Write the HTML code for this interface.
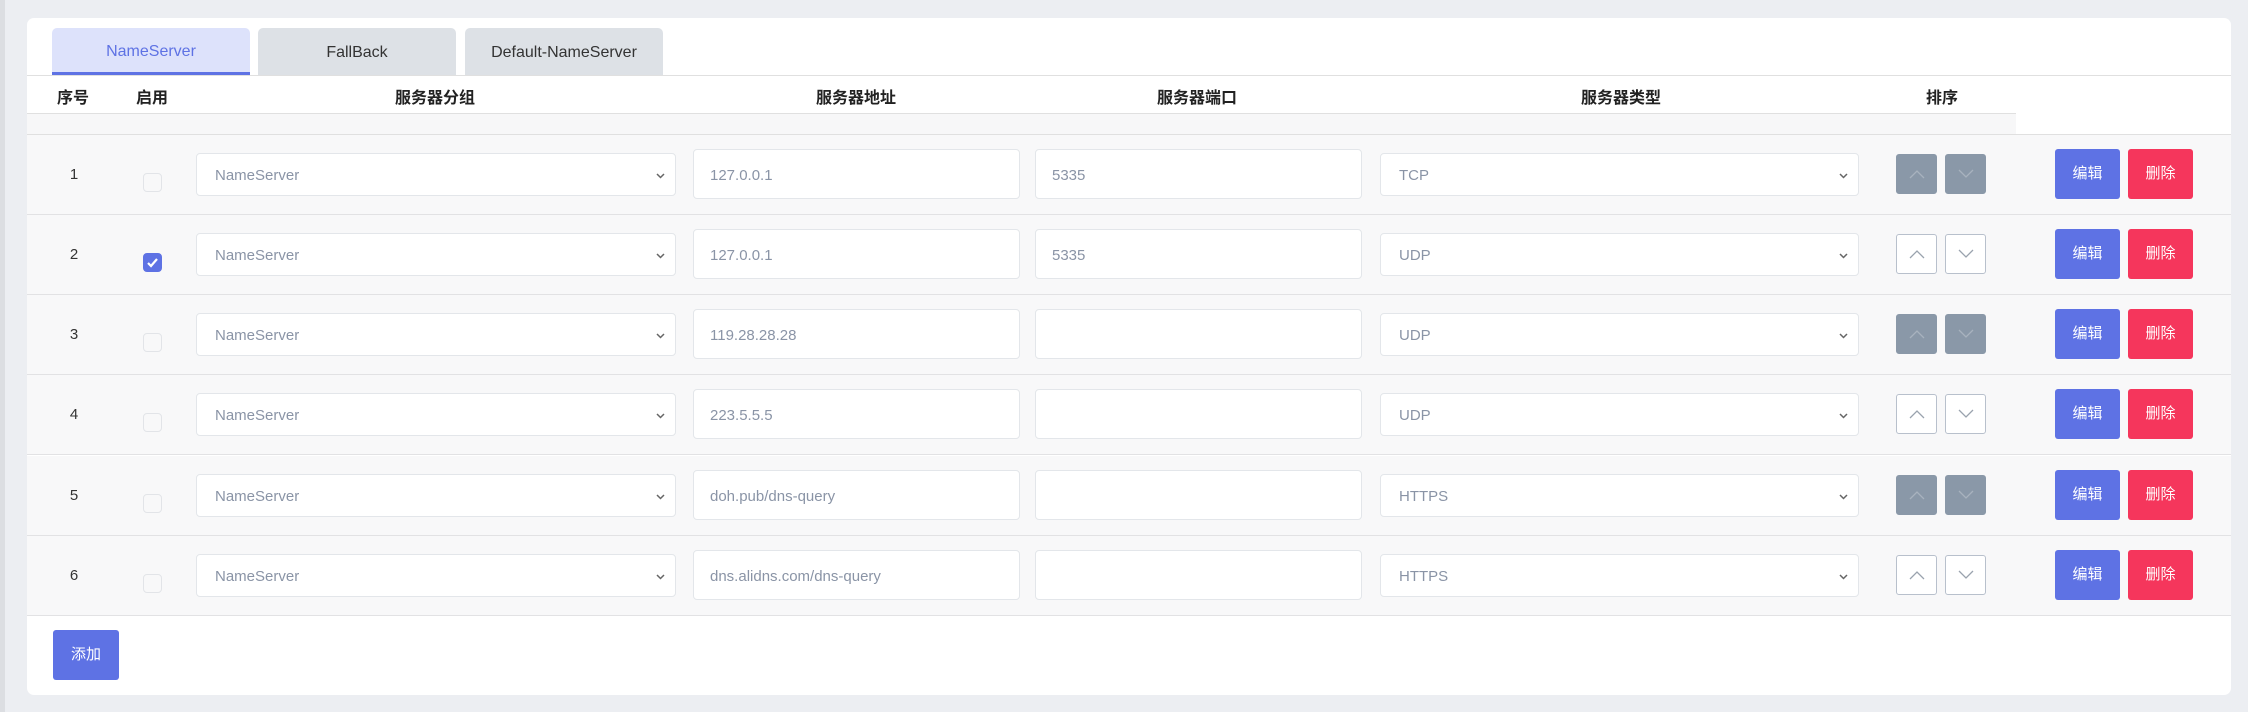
<!DOCTYPE html>
<html><head><meta charset="utf-8"><style>
*{box-sizing:border-box;margin:0;padding:0}
body{width:2248px;height:712px;background:#eceef2;font-family:"Liberation Sans","Noto Sans CJK SC",sans-serif;position:relative;overflow:hidden}
.strip{position:absolute;left:0;top:0;width:5px;height:712px;background:#dcdee2}
.card{position:absolute;left:27px;top:18px;width:2204px;height:677px;background:#fff;border-radius:7px}
.tab{position:absolute;top:28px;height:47px;width:198px;background:#dde1e6;border-radius:5px 5px 0 0;font-size:16px;color:#333;text-align:center;line-height:50px}
.tab.act{background:#dde2fb;color:#5e72e4;border-bottom:3px solid #5e72e4;line-height:48px}
.hline{position:absolute;left:27px;width:2204px;height:1px;background:#e0e0e0}
.th{position:absolute;top:84px;font-size:16px;font-weight:bold;color:#222;transform:translateX(-50%);white-space:nowrap}
.gray{position:absolute;left:27px;top:114px;width:1989px;height:20px;background:#f7f7f8}
.row{position:absolute;left:27px;width:2204px;height:80px;background:#f8f8f9;border-bottom:1px solid #e2e2e4}
.num{position:absolute;left:47px;width:0;top:31px;font-size:15px;color:#333;text-align:center}
.num span{position:absolute;transform:translateX(-50%)}
.cb{position:absolute;left:116px;top:38px;width:19px;height:19px;border:1px solid #e2e4e8;border-radius:4px;background:#f8f8f9}
.cb.on{background:#5e72e4;border-color:#5e72e4}
.sel{position:absolute;top:18px;height:43px;background:#fff;border:1px solid #e3e6ea;border-radius:4px;font-size:15px;color:#8a94a6;padding-left:18px;line-height:43px}
.sel svg{position:absolute;right:10px;top:18px}
.inp{position:absolute;top:14px;height:50px;background:#fff;border:1px solid #e3e6ea;border-radius:4px;font-size:15px;color:#8a94a6;padding-left:16px;line-height:52px}
.sb{position:absolute;top:19px;width:41px;height:40px;border-radius:3px;border:1px solid #b8c0cc;background:#fff}
.sb.dis{background:#8a98a8;border-color:#8a98a8}
.sb svg{position:absolute;left:12px;top:13px}
.btn{position:absolute;top:14px;width:65px;height:50px;border-radius:3px;color:#fff;font-size:15px;text-align:center;line-height:50px}
.edit{left:2028px;background:#5e72e4}
.del{left:2101px;background:#f5365c}
.add{position:absolute;left:53px;top:630px;width:66px;height:50px;background:#5e72e4;border-radius:3px;color:#fff;font-size:15px;text-align:center;line-height:50px}
</style></head><body>
<div class="strip"></div>
<div class="card"></div>
<div class="tab act" style="left:52px">NameServer</div>
<div class="tab" style="left:258px">FallBack</div>
<div class="tab" style="left:465px">Default-NameServer</div>
<div class="hline" style="top:75px"></div>
<div class="th" style="left:73px">序号</div>
<div class="th" style="left:152px">启用</div>
<div class="th" style="left:435px">服务器分组</div>
<div class="th" style="left:856px">服务器地址</div>
<div class="th" style="left:1197px">服务器端口</div>
<div class="th" style="left:1621px">服务器类型</div>
<div class="th" style="left:1942px">排序</div>
<div class="gray"></div>
<div class="hline" style="top:113px;width:1989px"></div>
<div class="hline" style="top:134px"></div>

<div class="row" style="top:135px">
<div class="num"><span>1</span></div><div class="cb"></div>
<div class="sel" style="left:169px;width:480px">NameServer<svg width="9" height="7" viewBox="0 0 9 7"><path d="M1 2l3.5 3.5L8 2" stroke="#666" stroke-width="1.5" fill="none"/></svg></div>
<div class="inp" style="left:666px;width:327px">127.0.0.1</div>
<div class="inp" style="left:1008px;width:327px">5335</div>
<div class="sel" style="left:1353px;width:479px">TCP<svg width="9" height="7" viewBox="0 0 9 7"><path d="M1 2l3.5 3.5L8 2" stroke="#666" stroke-width="1.5" fill="none"/></svg></div>
<div class="sb dis" style="left:1869px"><svg width="16" height="12" viewBox="0 0 16 12"><path d="M1 10l7-7 7 7" stroke="#a8b2be" stroke-width="1.3" fill="none"/></svg></div>
<div class="sb dis" style="left:1918px"><svg width="16" height="12" viewBox="0 0 16 12"><path d="M1 2l7 7 7-7" stroke="#a8b2be" stroke-width="1.3" fill="none"/></svg></div>
<div class="btn edit">编辑</div><div class="btn del">删除</div>
</div>

<div class="row" style="top:215px">
<div class="num"><span>2</span></div><div class="cb on"><svg width="17" height="17" viewBox="0 0 17 17"><path d="M4 9l3 3 6-7" stroke="#fff" stroke-width="2.2" fill="none"/></svg></div>
<div class="sel" style="left:169px;width:480px">NameServer<svg width="9" height="7" viewBox="0 0 9 7"><path d="M1 2l3.5 3.5L8 2" stroke="#666" stroke-width="1.5" fill="none"/></svg></div>
<div class="inp" style="left:666px;width:327px">127.0.0.1</div>
<div class="inp" style="left:1008px;width:327px">5335</div>
<div class="sel" style="left:1353px;width:479px">UDP<svg width="9" height="7" viewBox="0 0 9 7"><path d="M1 2l3.5 3.5L8 2" stroke="#666" stroke-width="1.5" fill="none"/></svg></div>
<div class="sb" style="left:1869px"><svg width="16" height="12" viewBox="0 0 16 12"><path d="M1 10l7-7 7 7" stroke="#9aa3ae" stroke-width="1.3" fill="none"/></svg></div>
<div class="sb" style="left:1918px"><svg width="16" height="12" viewBox="0 0 16 12"><path d="M1 2l7 7 7-7" stroke="#9aa3ae" stroke-width="1.3" fill="none"/></svg></div>
<div class="btn edit">编辑</div><div class="btn del">删除</div>
</div>

<div class="row" style="top:295px">
<div class="num"><span>3</span></div><div class="cb"></div>
<div class="sel" style="left:169px;width:480px">NameServer<svg width="9" height="7" viewBox="0 0 9 7"><path d="M1 2l3.5 3.5L8 2" stroke="#666" stroke-width="1.5" fill="none"/></svg></div>
<div class="inp" style="left:666px;width:327px">119.28.28.28</div>
<div class="inp" style="left:1008px;width:327px"></div>
<div class="sel" style="left:1353px;width:479px">UDP<svg width="9" height="7" viewBox="0 0 9 7"><path d="M1 2l3.5 3.5L8 2" stroke="#666" stroke-width="1.5" fill="none"/></svg></div>
<div class="sb dis" style="left:1869px"><svg width="16" height="12" viewBox="0 0 16 12"><path d="M1 10l7-7 7 7" stroke="#a8b2be" stroke-width="1.3" fill="none"/></svg></div>
<div class="sb dis" style="left:1918px"><svg width="16" height="12" viewBox="0 0 16 12"><path d="M1 2l7 7 7-7" stroke="#a8b2be" stroke-width="1.3" fill="none"/></svg></div>
<div class="btn edit">编辑</div><div class="btn del">删除</div>
</div>

<div class="row" style="top:375px">
<div class="num"><span>4</span></div><div class="cb"></div>
<div class="sel" style="left:169px;width:480px">NameServer<svg width="9" height="7" viewBox="0 0 9 7"><path d="M1 2l3.5 3.5L8 2" stroke="#666" stroke-width="1.5" fill="none"/></svg></div>
<div class="inp" style="left:666px;width:327px">223.5.5.5</div>
<div class="inp" style="left:1008px;width:327px"></div>
<div class="sel" style="left:1353px;width:479px">UDP<svg width="9" height="7" viewBox="0 0 9 7"><path d="M1 2l3.5 3.5L8 2" stroke="#666" stroke-width="1.5" fill="none"/></svg></div>
<div class="sb" style="left:1869px"><svg width="16" height="12" viewBox="0 0 16 12"><path d="M1 10l7-7 7 7" stroke="#9aa3ae" stroke-width="1.3" fill="none"/></svg></div>
<div class="sb" style="left:1918px"><svg width="16" height="12" viewBox="0 0 16 12"><path d="M1 2l7 7 7-7" stroke="#9aa3ae" stroke-width="1.3" fill="none"/></svg></div>
<div class="btn edit">编辑</div><div class="btn del">删除</div>
</div>

<div class="row" style="top:456px">
<div class="num"><span>5</span></div><div class="cb"></div>
<div class="sel" style="left:169px;width:480px">NameServer<svg width="9" height="7" viewBox="0 0 9 7"><path d="M1 2l3.5 3.5L8 2" stroke="#666" stroke-width="1.5" fill="none"/></svg></div>
<div class="inp" style="left:666px;width:327px">doh.pub/dns-query</div>
<div class="inp" style="left:1008px;width:327px"></div>
<div class="sel" style="left:1353px;width:479px">HTTPS<svg width="9" height="7" viewBox="0 0 9 7"><path d="M1 2l3.5 3.5L8 2" stroke="#666" stroke-width="1.5" fill="none"/></svg></div>
<div class="sb dis" style="left:1869px"><svg width="16" height="12" viewBox="0 0 16 12"><path d="M1 10l7-7 7 7" stroke="#a8b2be" stroke-width="1.3" fill="none"/></svg></div>
<div class="sb dis" style="left:1918px"><svg width="16" height="12" viewBox="0 0 16 12"><path d="M1 2l7 7 7-7" stroke="#a8b2be" stroke-width="1.3" fill="none"/></svg></div>
<div class="btn edit">编辑</div><div class="btn del">删除</div>
</div>

<div class="row" style="top:536px">
<div class="num"><span>6</span></div><div class="cb"></div>
<div class="sel" style="left:169px;width:480px">NameServer<svg width="9" height="7" viewBox="0 0 9 7"><path d="M1 2l3.5 3.5L8 2" stroke="#666" stroke-width="1.5" fill="none"/></svg></div>
<div class="inp" style="left:666px;width:327px">dns.alidns.com/dns-query</div>
<div class="inp" style="left:1008px;width:327px"></div>
<div class="sel" style="left:1353px;width:479px">HTTPS<svg width="9" height="7" viewBox="0 0 9 7"><path d="M1 2l3.5 3.5L8 2" stroke="#666" stroke-width="1.5" fill="none"/></svg></div>
<div class="sb" style="left:1869px"><svg width="16" height="12" viewBox="0 0 16 12"><path d="M1 10l7-7 7 7" stroke="#9aa3ae" stroke-width="1.3" fill="none"/></svg></div>
<div class="sb" style="left:1918px"><svg width="16" height="12" viewBox="0 0 16 12"><path d="M1 2l7 7 7-7" stroke="#9aa3ae" stroke-width="1.3" fill="none"/></svg></div>
<div class="btn edit">编辑</div><div class="btn del">删除</div>
</div>

<div class="add">添加</div>
</body></html>
